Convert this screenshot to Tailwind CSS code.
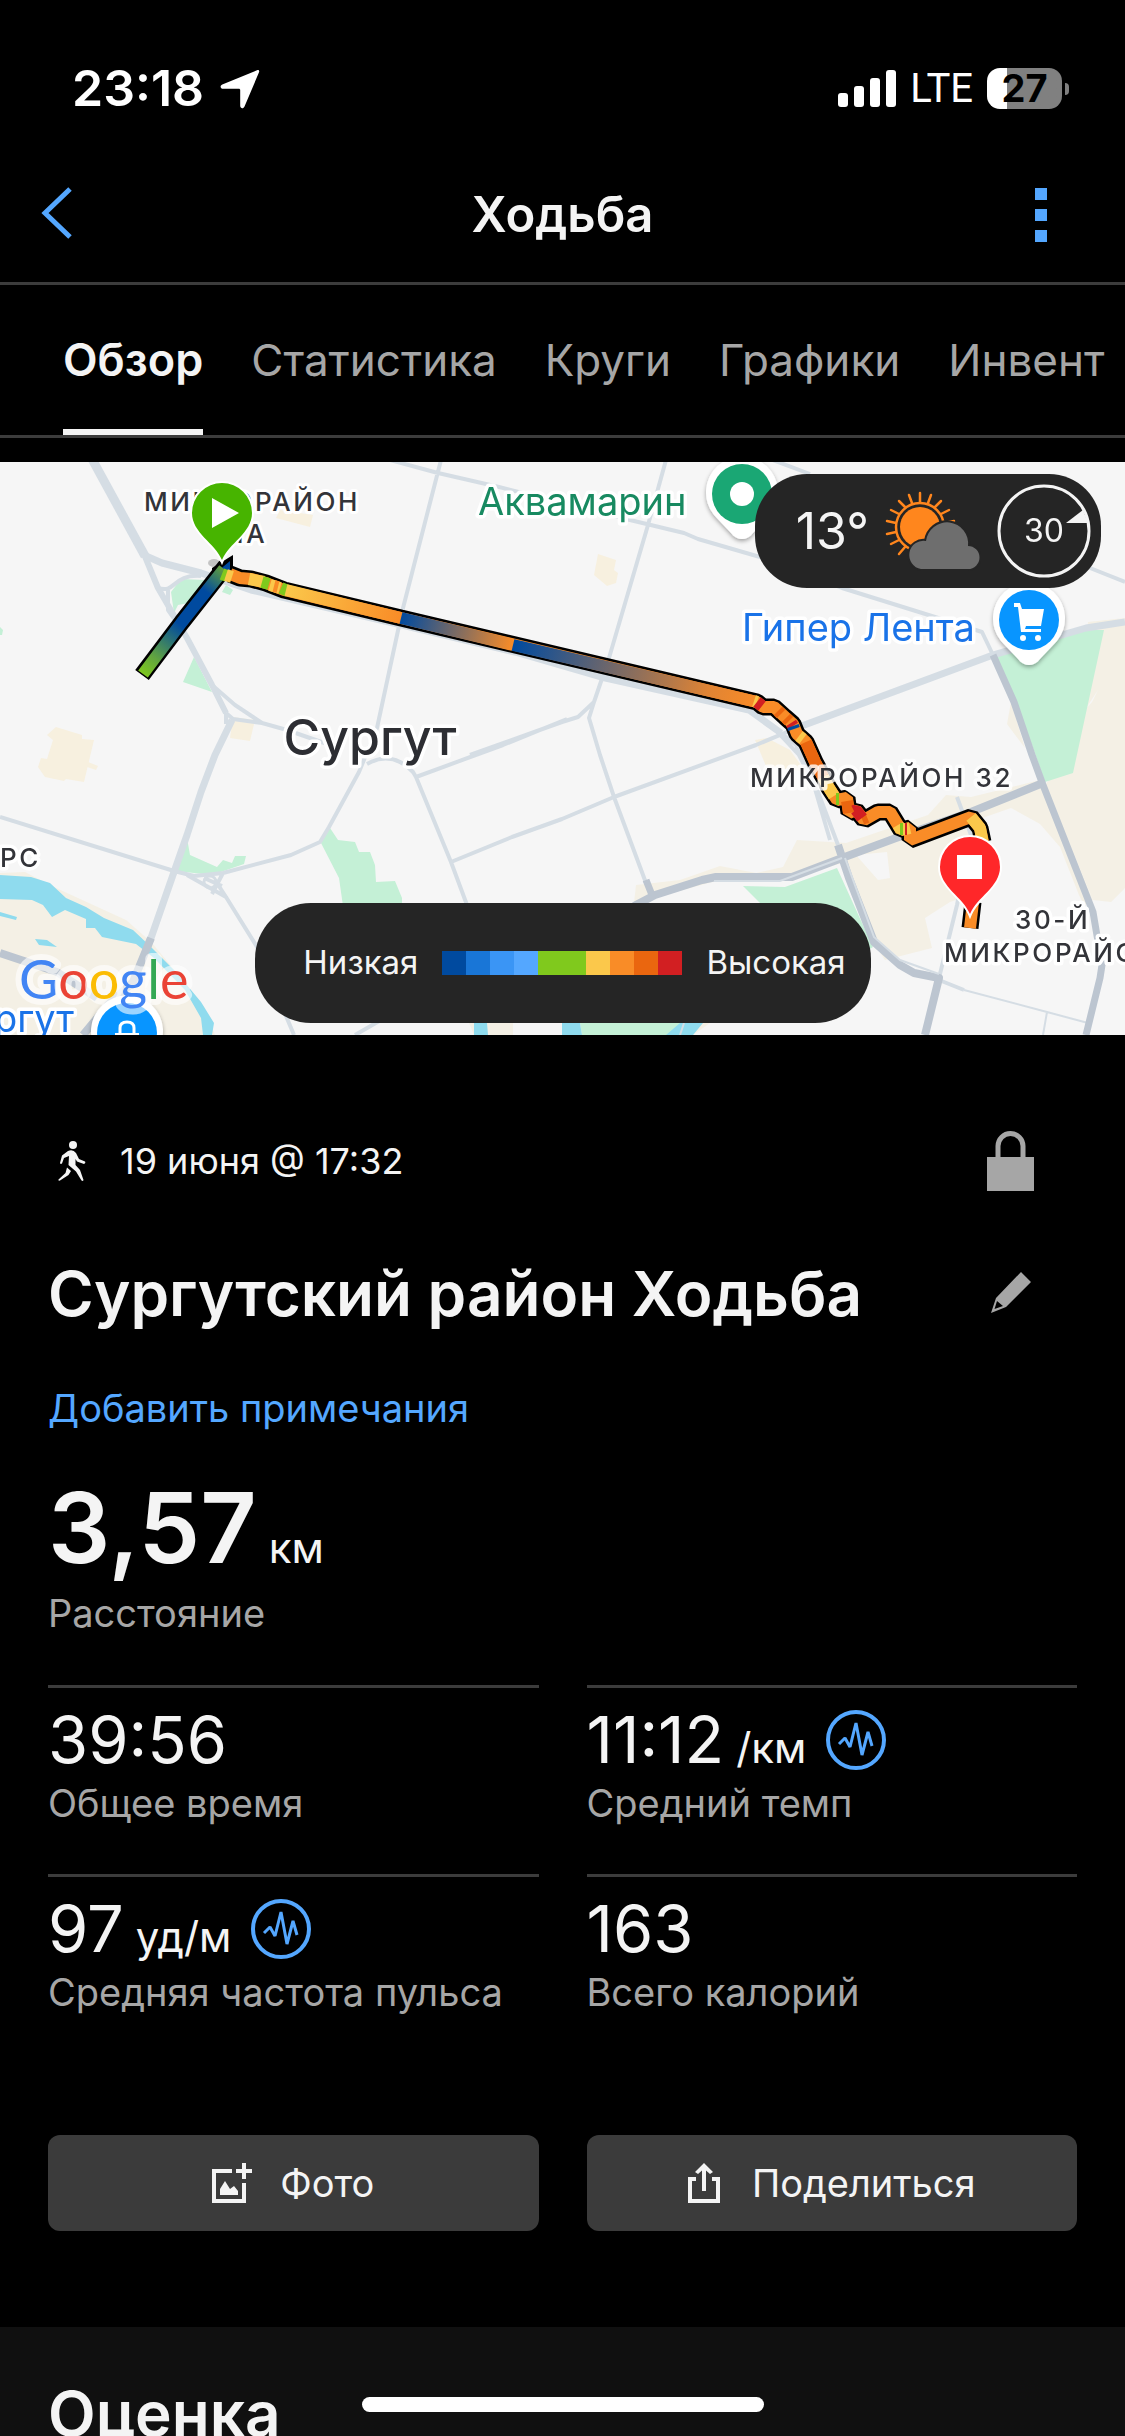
<!DOCTYPE html>
<html lang="ru">
<head>
    <meta charset="UTF-8">
    <meta name="viewport" content="width=device-width, initial-scale=1.0">
    <script src="https://cdn.jsdelivr.net/npm/@tailwindcss/browser@4"></script>
    <title>Ходьба</title>
</head>
<body class="bg-black text-[#f4f4f4] font-['Inter','Liberation_Sans',sans-serif] h-screen overflow-hidden flex flex-col">

    <!-- status bar -->
    <div class="shrink-0 h-[147px] pt-[30px] pl-[72px] pr-[56px] flex items-center justify-between text-white">
        <div class="flex items-center gap-4">
            <span class="text-[50px] font-semibold">23:18</span>
            <svg class="w-10 h-10" viewBox="0 0 40 40" fill="currentColor"><path d="M37 1.300C38.500.600 39.700 1.700 39 3.300L24.500 37.500C23.300 40.300 20.200 39.500 20.200 36.800V21.300C20.200 20.300 19.700 19.800 18.700 19.800H3.200C.400 19.800-.500 16.700 2.300 15.500Z"/></svg>
        </div>
        <div class="flex items-center gap-[14px]">
            <svg class="w-[58px] h-[37px]" viewBox="0 0 58 37" fill="currentColor"><rect y="23" width="10" height="14" rx="3"/><rect x="16" y="16" width="10" height="21" rx="3"/><rect x="32" y="8" width="10" height="29" rx="3"/><rect x="48" width="10" height="37" rx="3"/></svg>
            <span class="text-[40px] font-['Roboto',sans-serif]">LTE</span>
            <div class="flex items-center gap-[3px]">
                <div class="w-[75px] h-[41px] rounded-[13px] bg-linear-to-r from-white from-27% to-[#808080] to-27% flex items-center justify-center text-black text-[38px] font-bold">27</div>
                <div class="w-1 h-3 rounded-r-full bg-[#808080]"></div>
            </div>
        </div>
    </div>

    <header class="shrink-0 h-[138px] border-b-3 border-[#3c3c3c] px-10 grid grid-cols-[80px_1fr_80px] items-center">
        <button aria-label="Назад" class="mb-1 text-[#54a7ff]">
            <svg class="w-8 h-[52px]" viewBox="0 0 32 52" fill="none" stroke="currentColor" stroke-width="5"><path d="M30 2 5 26 30 50"/></svg>
        </button>
        <h1 class="text-[49px] font-semibold text-center">Ходьба</h1>
        <button aria-label="Меню" class="text-[#54a7ff] justify-self-end px-[38px]">
            <svg class="w-3 h-[54px]" viewBox="0 0 12 54" fill="currentColor"><path d="M0 0h12v12H0zM0 21h12v12H0zM0 42h12v12H0z"/></svg>
        </button>
    </header>

    <nav class="shrink-0 h-[153px] border-b-3 border-[#3c3c3c] pl-[63px] flex gap-12 text-[44px] text-[#a6a6a6] overflow-hidden">
        <button class="border-y-6 border-t-transparent border-b-[#f4f4f4] text-[45px] text-[#f4f4f4] font-semibold">Обзор</button>
        <button>Статистика</button>
        <button>Круги</button>
        <button>Графики</button>
        <button>Инвент</button>
    </nav>

    <section class="relative shrink-0 mt-6 overflow-hidden">
        <svg class="block w-full h-auto bg-[#f6f6f6]" viewBox="0 0 1125 573" fill="none">
            <defs>
                <linearGradient id="g1" gradientUnits="userSpaceOnUse" x1="142" y1="213" x2="228" y2="102"><stop offset="0" stop-color="#80c91d"/><stop offset=".15" stop-color="#62a53f"/><stop offset=".45" stop-color="#004a9f"/><stop offset=".75" stop-color="#004a9f"/><stop offset=".95" stop-color="#5f9d3d"/></linearGradient>
                <linearGradient id="g2" gradientUnits="userSpaceOnUse" x1="285" y1="128" x2="401" y2="156"><stop stop-color="#fbc84b"/><stop offset="1" stop-color="#f98c27"/></linearGradient>
                <linearGradient id="g3" gradientUnits="userSpaceOnUse" x1="401" y1="156" x2="513" y2="183"><stop stop-color="#004a9f"/><stop offset="1" stop-color="#f98c27"/></linearGradient>
                <linearGradient id="g4" gradientUnits="userSpaceOnUse" x1="513" y1="183" x2="757" y2="240"><stop stop-color="#004a9f"/><stop offset=".8" stop-color="#e08434"/><stop offset="1" stop-color="#f98c27"/></linearGradient>
                <path id="walk" d="M230 112 240 116 251 117 266 121 284 128 401 156 757 240 763 245 774 245 785 255 793 262 797 272 806 280 815 300 829 326 837 338 847 336 849 351 856 348 864 358 878 350H890L901 368 910 366V378L971 355 980 366 983 380M973 440 970 466"/>
                <path id="pin" d="M0 77C-7 60-30 50-30 30A30 30 0 0 1 30 30C30 50 7 60 0 77Z"/>
                <path id="poi" d="M0 45C-4 45-8 43-11 39L-28 21A36 36 0 1 1 28 21L11 39C8 43 4 45 0 45Z"/>
                <filter id="shade" x="-30%" y="-30%" width="160%" height="160%"><feDropShadow dx="0" dy="2" stdDeviation="2" flood-opacity=".35"/></filter>
            </defs>

            <!-- land -->
            <g fill="#f4f0e5">
                <path d="M0 411 25 410 54 425 126 458 151 480 187 523 205 546 215 573H0Z"/>
                <path d="M1088 160 1125 156V426L1111 440 1093 438 1045 323 1077 283Z"/>
                <path d="M636 423 680 418 720 404 756 411 783 405 797 378 846 381 928 353 946 333 971 335 1040 318 1048 330 1093 438 1084 443 1079 433 1060 385 1040 362 1011 346 971 360 1000 400 980 430 950 440 925 456 932 486 885 498 873 480 846 400 792 415 720 418 634 441Z"/>
                <path d="M469 561H513V573H474ZM693 573 710 561H690ZM1011 240 1007 262 1025 286Z"/>
            </g>
            <path fill="#f6f6f6" d="M887 390 890 416 878 418 856 393ZM1082 170 1090 166 1093 172 1092 181 1083 180ZM1098 228 1092 240 1085 248Z"/>
            <g fill="#f7f0df">
                <path d="M56 265 82 273V277L94 278 84 320 66 317 64 319 45 315 38 305 41 296 47 297 53 278 47 273Z"/>
                <path d="M88 300 98 304 96 308 87 305ZM233 255 255 258 250 279 230 276ZM280 48 313 53 310 65 276 56ZM598 92 616 98 614 108 618 111 616 121 607 124 594 113Z"/>
                <path d="M755 278 767 276 790 288 806 310 766 304Z"/>
            </g>
            <g fill="#c4f0d6">
                <path d="M171 130 181 117 205 118 214 126 194 140 178 143 174 151ZM226 123 233 128 230 133 222 130ZM194 195 212 230 183 220ZM0 165 3 168 2 173H0Z"/>
                <path d="M187 376 190 393 217 405 223 398 232 401 235 394H246L244 402 212 413 176 409Z"/>
                <path d="M330 366 338 378 355 380 359 390H370L375 403 376 420 395 419 402 436V444H343L339 416 321 381Z"/>
                <path d="M995 195 1065 175 1085 168H1104L1073 311 1045 320 1032 283ZM743 424 785 425 837 406 873 485 850 500 760 441ZM580 561H690L668 573H582Z"/>
            </g>
            <g fill="#8fdbee">
                <path d="M0 413 31 415 50 421 66 436 86 445 104 456 133 468 151 485 176 510 201 540 214 561 212 573H203L201 556 185 528 154 496 136 482 102 475 95 466H86V457L65 448 52 455 43 443 32 438 0 437Z"/>
                <path d="M0 450 17 455 16 458 0 454ZM35 477 47 478 57 485 39 483ZM474 561H487L488 573H474ZM562 561H580L582 573H562ZM680 561H703L693 573H666Z"/>
            </g>

            <!-- roads -->
            <g stroke="#d5dde4" stroke-width="4" stroke-linejoin="round">
                <path stroke-width="9" d="M92-3 145 94"/>
                <path stroke-width="6" d="M144 92 158 126 187 176 212 223 226 251"/>
                <path d="M226 251 233 257 262 261 287 268 330 283M158 126C176 132 172 112 201 114M168 128V148L182 168M212 223 235 243 262 261M226 251V262M390-2 438 11 499 25 630 58 684 71 698 77 760 95 842 126 935 155 982 170 993 193M441-2 402 150 377 266 359 310 329 365 320 380 291 393 223 411 194 414 174 409 0 355M666-2 648 63 609 196 594 240 589 256 600 293 614 335 646 421M594 240 578 255 562 260 470 293M367 302Q392 288 413 310L416 315 503 283 567 257M416 315 451 400 467 443M451 400 512 375 562 357 614 335 756 283 799 265M187 413 226 435 215 418M204 416 222 424M223 411 212 432M226 435 257 485 294 573M355 573 381 558M770-3 810 12M1090 106 1125 120"/>
                <circle cx="210" cy="420" r="6" stroke-width="3"/>
                <path stroke-width="7" d="M146 94 162 101 201 111 251 128 402 163 515 190 601 215 749 248 781 271M799 265 993 193 1086 166 1125 160M232 258 215 293 201 330 187 373 174 410 151 476 133 520"/>
                <path d="M749 248 770 262 799 293 818 330 838 383M781 271 796 283 813 320 830 378M939 516 957 443 971 373 957 335M939 518 964 528"/>
                <path stroke-width="2" d="M964 528 1047 550 1088 561M1047 550 1043 573M684 561 680 573"/>
            </g>
            <g stroke="#bcc5d0" stroke-width="8" stroke-linejoin="round">
                <path d="M0 491 57 510 97 536M151 476 133 520 108 543 83 573"/>
                <path d="M634 444 655 433 702 418 716 415H792L842 396 896 376 971 350 1043 321M838 383 849 416 874 480 900 503 914 511 939 516 925 573"/>
                <path stroke-width="7" d="M993 193 1014 240 1032 293 1043 323 1093 450 1102 503 1100 516 1086 573M646 418 652 433"/>
            </g>
            <path stroke="#d5dde4" stroke-width="2" d="M714 419H780L842 396M845 396 874 475 900 498 939 512"/>

            <!-- labels under the route -->
            <g class="font-medium tracking-widest text-[26px]" fill="#333439" stroke="#fff" stroke-width="6" stroke-linejoin="round" paint-order="stroke" text-anchor="middle">
                <text x="252" y="49">МИКРОРАЙОН</text>
                <text x="250" y="81">1А</text>
            </g>

            <!-- route -->
            <path fill="#000" d="M233 93V118H212V106Z"/>
            <g stroke="#000" stroke-width="17" stroke-linejoin="bevel">
                <path d="M142 213 182 160 226 104"/>
                <use href="#walk"/>
            </g>
            <use href="#walk" stroke="#f98c27" stroke-width="12" stroke-linejoin="bevel"/>
            <path fill="#004a9f" d="M230 99V110H217Z"/>
            <g stroke-width="12" stroke-linejoin="bevel">
                <path stroke="url(#g1)" d="M143 212 182 160 224 107"/>
                <path stroke="#80c91d" d="M222 112 227 114"/>
                <path stroke="#fbc84b" d="M226 113 232 115"/>
                <path stroke="#fbc84b" d="M249 117 264 120M270 123 280 126"/>
                <path stroke="#80c91d" d="M262 120 269 122M281 126 288 129"/>
                <path stroke="#f98c27" d="M274 124 278 125"/>
                <path stroke="url(#g2)" d="M286 128 401 156"/>
                <path stroke="url(#g3)" d="M401 156 513 183"/>
                <path stroke="url(#g4)" d="M513 183 757 240"/>
                <path stroke="#fbc84b" d="M754 239 757 240M799 274 803 277"/>
                <path stroke="#d21f22" d="M757 240 762 244M791 261 793 264"/>
                <path stroke="#004a9f" d="M793 264 794 267"/>
                <path stroke="#ea660f" d="M778 249 781 252M786 256 789 259M806 280 815 300 823 315"/>
                <path stroke="#fbc84b" d="M823 315 829 326 834 334"/>
                <path stroke="#80c91d" d="M836 337 839 337"/>
                <path stroke="#ea660f" d="M847 339 849 351"/>
                <path stroke="#ea660f" d="M862 357 867 355"/>
                <path stroke="#d21f22" d="M854 349 856 348 862 356"/>
                <path stroke="#fbc84b" d="M898 363 901 368 910 366"/>
                <path stroke="#80c91d" d="M900 367 903 367"/>
                <path stroke="#d21f22" d="M905 367 907 367"/>
                <path stroke="#fbc84b" d="M971 355 980 366 983 382"/>
            </g>

            <!-- places -->
            <g filter="url(#shade)" fill="#fff">
                <use href="#poi" x="742" y="32"/>
                <use href="#poi" x="1029" y="158"/>
                <use href="#poi" x="127" y="571"/>
            </g>
            <circle cx="742" cy="32" r="30" fill="#1aa774"/>
            <circle cx="742" cy="32" r="12" fill="#fff"/>
            <circle cx="1029" cy="158" r="30" fill="#0895ff"/>
            <path fill="#fff" d="M1014 141H1020L1022 147H1044L1041 164H1026L1025 167H1041V170H1021L1018 145H1014ZM1020 176A3 3 0 1 0 1026 176 3 3 0 1 0 1020 176M1035 176A3 3 0 1 0 1041 176 3 3 0 1 0 1035 176"/>
            <circle cx="127" cy="571" r="30" fill="#0895ff"/>
            <path fill="#fff" d="M115 571H139V576H115Z"/>
            <path stroke="#fff" stroke-width="3" d="M120 571V566Q120 560 127 560T134 566V571"/>
            <g stroke="#fff" stroke-width="7" stroke-linejoin="round" paint-order="stroke">
                <text class="text-[38px]" x="478" y="53" fill="#188a61">Аквамарин</text>
                <text class="text-[38px]" x="742" y="179" fill="#1a73e8">Гипер Лента</text>
                <text class="text-[38px]" x="74" y="570" fill="#1a73e8" text-anchor="end">Сургут</text>
                <text class="text-[50px] font-medium" x="370" y="293" fill="#2d2e33" text-anchor="middle">Сургут</text>
                <g class="font-medium tracking-widest text-[26px]" fill="#333439">
                    <text x="750" y="325" stroke-opacity=".8">МИКРОРАЙОН 32</text>
                    <text x="0" y="405">РС</text>
                    <text x="1015" y="467">30-Й</text>
                    <text x="944" y="500">МИКРОРАЙОН</text>
                </g>
            </g>

            <ellipse cx="214" cy="101" rx="6" ry="4" fill="#000" opacity=".2"/>
            <g stroke="#fff" stroke-width="4" paint-order="stroke">
                <use href="#pin" x="222" y="21" fill="#47b400"/>
                <use href="#pin" x="970" y="375" fill="#ff2729"/>
            </g>
            <path fill="#fff" d="M212 36 239 51 212 66ZM957 393H982V417H957Z"/>

            <text class="text-[54px] font-[Lato]" x="19" y="537" stroke="#fff" stroke-opacity=".6" stroke-width="12" stroke-linejoin="round" paint-order="stroke"><tspan fill="#4285f4">G</tspan><tspan fill="#ea4335">o</tspan><tspan fill="#fbbc04">o</tspan><tspan fill="#4285f4">g</tspan><tspan fill="#34a853">l</tspan><tspan fill="#ea4335">e</tspan></text>
        </svg>

        <!-- weather -->
        <div class="absolute top-3 right-6 h-[114px] pl-[41px] pr-[10px] rounded-[52px] bg-[#252525] flex items-center gap-4">
            <span class="text-[50px]">13°</span>
            <svg class="w-24 h-20" viewBox="0 0 96 80">
                <g fill="none" stroke="#ff861d" stroke-width="2.500" stroke-linecap="round">
                    <circle cx="35" cy="36" r="24"/>
                    <path d="M35 11V2M43 12 46 4M50 16 56 10M56 23 64 19M59 32 69 30M27 12 24 4M20 16 14 10M14 23 6 19M11 32 2 30M11 41 2 43M14 49 6 53M20 56 14 63"/>
                </g>
                <circle cx="35" cy="36" r="20" fill="#ff861d"/>
                <path d="M36 78A14 14 0 1 1 41 50A21 21 0 0 1 83 55A11.500 11.500 0 0 1 83 78Z" fill="#6e6e6e" stroke="#252525" stroke-width="4" paint-order="stroke"/>
            </svg>
            <div class="w-[94px] h-[94px] relative flex items-center justify-center text-[32px]">
                <svg class="absolute inset-0" viewBox="0 0 94 94"><circle cx="47" cy="47" r="45" fill="none" stroke="#f4f4f4" stroke-width="3"/><path d="M69 39H91L86 26Z" fill="#f4f4f4"/></svg>
                30
            </div>
        </div>

        <!-- heart rate scale -->
        <div class="absolute bottom-3 left-1/2 -translate-x-1/2 h-[120px] w-[616px] pl-6 rounded-[56px] bg-[#252525] flex items-center justify-center gap-6 text-[33px]">
            <span>Низкая</span>
            <div class="flex h-6">
                <div class="w-6 bg-[#004a9f]"></div>
                <div class="w-6 bg-[#1976d7]"></div>
                <div class="w-6 bg-[#3a95f5]"></div>
                <div class="w-6 bg-[#54a7ff]"></div>
                <div class="w-12 bg-[#80c91d]"></div>
                <div class="w-6 bg-[#fbc84b]"></div>
                <div class="w-6 bg-[#f98c27]"></div>
                <div class="w-6 bg-[#ea660f]"></div>
                <div class="w-6 bg-[#d21f22]"></div>
            </div>
            <span>Высокая</span>
        </div>
    </section>

    <main class="shrink-0 px-12 pt-24">
        <div class="h-[60px] pr-[43px] flex items-center">
            <svg class="ml-[10px] mr-[34px] w-7 h-10" viewBox="0 0 28 40" fill="currentColor"><circle cx="15" cy="4" r="4"/><path d="M10 10Q15 8 18 12L21 18 27 20.500Q28 22 26 23L19 20.500 17.500 18V24L22 29 25.500 39Q25 40.500 23.500 39.500L18 30.500 10.500 24 11 15 6 17 4 22.500Q2.500 23.500 2 22L4 14.500ZM9 26.500 13 30 10.500 34 2 39.500Q0 40 .500 38.500L7.500 32Z"/></svg>
            <span class="text-[36px]">19 июня @ 17:32</span>
            <svg class="ml-auto w-[47px] h-[60px] text-[#a6a6a6]" viewBox="0 0 47 60"><path fill="currentColor" d="M0 26H47V60H0Z"/><path fill="none" stroke="currentColor" stroke-width="5" d="M11 27V15A12.500 12.500 0 0 1 36 15V27"/></svg>
        </div>

        <div class="mt-[62px] h-20 pr-[46px] flex items-center justify-between">
            <h2 class="text-[62px] font-semibold whitespace-nowrap">Сургутский район Ходьба</h2>
            <button aria-label="Изменить название" class="text-[#a6a6a6]">
                <svg class="w-10 h-[42px]" viewBox="0 0 40 42" fill="currentColor"><path fill-rule="evenodd" d="M30 0 40 10 15 35 0 41 5 26ZM6 29 3.500 37 12 34Z"/></svg>
            </button>
        </div>

        <a href="#" class="block mt-12 text-[38px] leading-[54px] text-[#54a7ff]">Добавить примечания</a>

        <div class="mt-10">
            <div class="h-[106px] flex items-baseline gap-3 text-[42px]"><span class="text-[98px] leading-[106px] font-semibold">3,57</span>км</div>
            <div class="mt-2 text-[38px] leading-[48px] text-[#a6a6a6]">Расстояние</div>
        </div>

        <div class="mt-[48px] grid grid-cols-2 gap-x-12">
            <div class="h-[189px] border-t-3 border-[#3c3c3c] pt-4">
                <div class="text-[65px] leading-[72px]">39:56</div>
                <div class="text-[38px] leading-[54px] text-[#a6a6a6]">Общее время</div>
            </div>
            <div class="h-[189px] border-t-3 border-[#3c3c3c] pt-4">
                <div class="h-[72px] flex items-center gap-5">
                    <div class="h-[72px] flex items-baseline gap-3 text-[42px] leading-[72px]"><span class="text-[65px]">11:12</span>/км</div>
                    <svg class="w-[60px] h-[60px] text-[#54a7ff]" viewBox="0 0 60 60" fill="none" stroke="currentColor"><circle cx="30" cy="30" r="28" stroke-width="4"/><path stroke-width="3" stroke-linejoin="bevel" d="M13 34 19 28 24 37 30 13 36 45 42 22 46 36"/></svg>
                </div>
                <div class="text-[38px] leading-[54px] text-[#a6a6a6]">Средний темп</div>
            </div>
            <div class="h-[189px] border-t-3 border-[#3c3c3c] pt-4">
                <div class="h-[72px] flex items-center gap-5">
                    <div class="h-[72px] flex items-baseline gap-3 text-[42px] leading-[72px]"><span class="text-[65px]">97</span>уд/м</div>
                    <svg class="w-[60px] h-[60px] text-[#54a7ff]" viewBox="0 0 60 60" fill="none" stroke="currentColor"><circle cx="30" cy="30" r="28" stroke-width="4"/><path stroke-width="3" stroke-linejoin="bevel" d="M13 34 19 28 24 37 30 13 36 45 42 22 46 36"/></svg>
                </div>
                <div class="text-[38px] leading-[54px] text-[#a6a6a6] whitespace-nowrap">Средняя частота пульса</div>
            </div>
            <div class="h-[189px] border-t-3 border-[#3c3c3c] pt-4">
                <div class="text-[65px] leading-[72px]">163</div>
                <div class="text-[38px] leading-[54px] text-[#a6a6a6]">Всего калорий</div>
            </div>
        </div>

        <div class="mt-[72px] grid grid-cols-2 gap-12 text-[38px]">
            <button class="h-24 rounded-xl bg-[#3b3b3b] flex items-center justify-center gap-7">
                <svg class="w-10 h-10" viewBox="0 0 40 40" fill="currentColor"><path d="M0 6H20V10H4V36H30V20H34V40H0ZM24 6H30V0H34V6H40V10H34V16H30V10H24ZM8 32V26L13 18 18 26 22 23 26 28V32Z"/></svg>
                Фото
            </button>
            <button class="h-24 rounded-xl bg-[#3b3b3b] flex items-center justify-center gap-8">
                <svg class="w-8 h-10" viewBox="0 0 32 40" fill="currentColor"><path d="M0 14H8V18H4V36H28V18H24V14H32V40H0ZM16 0 25 9 22 11 18 7.500V28H14V7.500L10 11 7 9Z"/></svg>
                Поделиться
            </button>
        </div>
    </main>

    <section class="mt-24 grow px-12 pt-[50px] bg-[#101010]">
        <h2 class="text-[62px] leading-[74px] font-semibold">Оценка</h2>
    </section>

    <div class="fixed bottom-6 left-1/2 -translate-x-1/2 w-[402px] h-[15px] rounded-full bg-white"></div>
</body>
</html>
